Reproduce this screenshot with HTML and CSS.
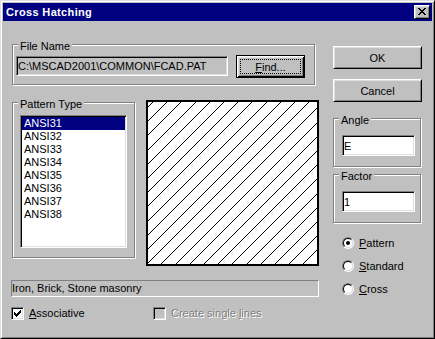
FILE: index.html
```html
<!DOCTYPE html>
<html>
<head>
<meta charset="utf-8">
<title>Cross Hatching</title>
<link rel="stylesheet" href="styles.css">
</head>
<body>
<div class="window">
  <div class="titlebar">
    <span class="title">Cross Hatching</span>
    <span class="close"><svg width="8" height="7" viewBox="0 0 8 7" shape-rendering="crispEdges"><path fill="#000" d="M0 0h2v1h-2zM6 0h2v1h-2zM1 1h2v1h-2zM5 1h2v1h-2zM2 2h4v1h-4zM3 3h2v1h-2zM2 4h4v1h-4zM1 5h2v1h-2zM5 5h2v1h-2zM0 6h2v1h-2zM6 6h2v1h-2z"/></svg></span>
  </div>
  <div class="content">
    <div class="left">
      <div class="group file-group">
        <div class="legend">File Name</div>
        <div class="file-row">
          <div class="edit readonly file-edit">C:\MSCAD2001\COMMON\FCAD.PAT</div>
          <div class="button default find"><span class="focus"><u>F</u>ind...</span></div>
        </div>
      </div>
      <div class="pattern-row">
        <div class="group pattern-group">
          <div class="legend">Pattern Type</div>
          <div class="listbox">
            <div class="item selected">ANSI31</div>
            <div class="item">ANSI32</div>
            <div class="item">ANSI33</div>
            <div class="item">ANSI34</div>
            <div class="item">ANSI35</div>
            <div class="item">ANSI36</div>
            <div class="item">ANSI37</div>
            <div class="item">ANSI38</div>
          </div>
        </div>
        <div class="preview">
          <svg width="169" height="162" viewBox="0 0 169 162" shape-rendering="crispEdges"><path stroke="#000" stroke-width="1" fill="none" d="M5 0L-195 200M19 0L-181 200M33 0L-167 200M48 0L-152 200M62 0L-138 200M76 0L-124 200M90 0L-110 200M104 0L-96 200M119 0L-81 200M133 0L-67 200M147 0L-53 200M161 0L-39 200M175 0L-25 200M190 0L-10 200M204 0L4 200M218 0L18 200M232 0L32 200M246 0L46 200M261 0L61 200M275 0L75 200M289 0L89 200M303 0L103 200M317 0L117 200M332 0L132 200"/></svg>
        </div>
      </div>
      <div class="status">Iron, Brick, Stone masonry</div>
      <div class="checks">
        <div class="check">
          <span class="box"><svg width="7" height="7" viewBox="0 0 7 7" shape-rendering="crispEdges"><path fill="#000" d="M6 0h1v1h-1zM5 1h2v1h-2zM0 2h1v1h-1zM4 2h3v1h-3zM0 3h2v1h-2zM3 3h3v1h-3zM0 4h5v1h-5zM1 5h3v1h-3zM2 6h1v1h-1z"/></svg></span>
          <span class="check-label"><u>A</u>ssociative</span>
        </div>
        <div class="check disabled">
          <span class="box"></span>
          <span class="check-label">Create single <u>l</u>ines</span>
        </div>
      </div>
    </div>
    <div class="right">
      <div class="button ok">OK</div>
      <div class="button cancel">Cancel</div>
      <div class="group small-group angle-group">
        <div class="legend">Angle</div>
        <div class="edit small-edit">E</div>
      </div>
      <div class="group small-group factor-group">
        <div class="legend">Factor</div>
        <div class="edit small-edit">1</div>
      </div>
      <div class="radios">
        <div class="radio checked"><span class="circle"><span class="circle-inner"><span class="dot"></span></span></span><span class="radio-label"><u>P</u>attern</span></div>
        <div class="radio"><span class="circle"><span class="circle-inner"></span></span><span class="radio-label"><u>S</u>tandard</span></div>
        <div class="radio"><span class="circle"><span class="circle-inner"></span></span><span class="radio-label"><u>C</u>ross</span></div>
      </div>
    </div>
  </div>
</div>
</body>
</html>
```
FILE: styles.css
```css
* { box-sizing: border-box; }
html, body { margin: 0; padding: 0; }
body {
  width: 435px;
  height: 339px;
  background: #c0c0c0;
  font-family: "Liberation Sans", Arial, sans-serif;
  font-size: 11px;
  color: #000;
}
u { text-decoration: underline; text-underline-offset: 1px; }

.window {
  width: 435px;
  height: 339px;
  background: #c0c0c0;
  border: 1px solid;
  border-color: #dfdfdf #000 #000 #dfdfdf;
  box-shadow: inset 1px 1px #fff, inset -1px -1px #808080;
  padding: 2px;
  display: flex;
  flex-direction: column;
}

.titlebar {
  flex: none;
  height: 18px;
  background: #000080;
  color: #fff;
  display: flex;
  align-items: center;
  justify-content: space-between;
  padding: 0 2px 0 3px;
}
.title {
  font-weight: bold;
  letter-spacing: 0.35px;
  line-height: 18px;
}
.close {
  width: 16px;
  height: 14px;
  background: #c0c0c0;
  border: 1px solid;
  border-color: #fff #000 #000 #fff;
  box-shadow: inset 1px 1px #dfdfdf, inset -1px -1px #808080;
  padding: 2px 0 0 3px;
  display: block;
}
.close svg { display: block; }

.content {
  flex: 1;
  display: flex;
  padding-left: 8px;
  gap: 14px;
}
.left {
  width: 308px;
  display: flex;
  flex-direction: column;
}
.right {
  width: 89px;
  display: flex;
  flex-direction: column;
}

.group {
  border: 1px solid #808080;
  box-shadow: inset 1px 1px #fff, 1px 1px #fff;
  display: flex;
  flex-direction: column;
}
.legend {
  align-self: flex-start;
  margin: -5px 0 0 5px;
  padding: 0 2px;
  height: 13px;
  line-height: 13px;
  background: #c0c0c0;
  white-space: nowrap;
}

.file-group {
  margin: 23px 0 0 1px;
  width: 303px;
  padding-bottom: 6px;
}
.file-row {
  display: flex;
  align-items: flex-start;
  margin: 2px 0 0 3px;
}

.edit {
  border: 1px solid;
  border-color: #808080 #fff #fff #808080;
  box-shadow: inset 1px 1px #000, inset -1px -1px #dfdfdf;
  background: #fff;
  padding-left: 1px;
  display: flex;
  align-items: center;
  white-space: nowrap;
  overflow: hidden;
}
.edit.readonly { background: #c0c0c0; }
.file-edit {
  margin-top: 1px;
  width: 212px;
  height: 20px;
}

.button {
  height: 23px;
  background: #c0c0c0;
  border: 1px solid;
  border-color: #fff #000 #000 #fff;
  box-shadow: inset 1px 1px #dfdfdf, inset -1px -1px #808080;
  display: flex;
  align-items: center;
  justify-content: center;
  white-space: nowrap;
}
.button.default {
  border-color: #000;
  box-shadow: inset 1px 1px #fff, inset -1px -1px #000, inset 2px 2px #dfdfdf, inset -2px -2px #808080;
  padding: 3px;
}
.find {
  margin-left: 8px;
  width: 69px;
}
.focus {
  flex: 1;
  align-self: stretch;
  border: 1px dotted #000;
  display: flex;
  align-items: center;
  justify-content: center;
}

.pattern-row {
  margin-top: 15px;
  display: flex;
  align-items: flex-start;
}
.pattern-group {
  margin: 2px 0 0 1px;
  width: 123px;
}
.listbox {
  margin: 4px 7px 9px 7px;
  height: 133px;
  background: #fff;
  border: 1px solid;
  border-color: #808080 #fff #fff #808080;
  box-shadow: inset 1px 1px #000, inset -1px -1px #dfdfdf;
  padding: 1px;
}
.item {
  height: 13px;
  line-height: 13px;
  padding-left: 2px;
  white-space: nowrap;
}
.item.selected {
  background: #000080;
  color: #fff;
}
.preview {
  margin-left: 11px;
  width: 173px;
  height: 166px;
  border: 2px solid #000;
  background: #fff;
}
.preview svg { display: block; }

.status {
  margin-top: 14px;
  height: 17px;
  line-height: 15px;
  border: 1px solid;
  border-color: #808080 #fff #fff #808080;
  padding-left: 0;
  white-space: nowrap;
}

.checks {
  margin-top: 10px;
  display: grid;
  grid-template-columns: 142px auto;
}
.check {
  display: flex;
  align-items: center;
  height: 13px;
  white-space: nowrap;
}
.box {
  width: 13px;
  height: 13px;
  flex: none;
  border: 1px solid;
  border-color: #808080 #fff #fff #808080;
  box-shadow: inset 1px 1px #000, inset -1px -1px #dfdfdf;
  background: #fff;
  padding: 2px 0 0 2px;
  display: block;
}
.box svg { display: block; }
.check-label { margin-left: 5px; line-height: 13px; }
.check.disabled .box { background: #c0c0c0; }
.check.disabled .check-label {
  color: #808080;
  text-shadow: 1px 1px 0 #fff;
}

.ok { margin-top: 25px; }
.cancel { margin-top: 10px; }
.small-group { width: 88px; }
.angle-group { margin-top: 16px; }
.factor-group { margin-top: 7px; }
.small-edit {
  margin: 8px 0 10px 8px;
  width: 73px;
  height: 21px;
}

.radios {
  margin-top: 8px;
  display: flex;
  flex-direction: column;
}
.radio {
  height: 23px;
  display: flex;
  align-items: center;
  padding-left: 9px;
  white-space: nowrap;
}
.circle {
  width: 12px;
  height: 12px;
  flex: none;
  border-radius: 50%;
  border: 1px solid;
  border-color: #808080 #fff #fff #808080;
  display: flex;
}
.circle-inner {
  flex: 1;
  border-radius: 50%;
  border: 1px solid;
  border-color: #000 #dfdfdf #dfdfdf #000;
  background: #fff;
  display: flex;
  align-items: center;
  justify-content: center;
}
.dot {
  width: 4px;
  height: 4px;
  border-radius: 50%;
  background: #000;
}
.radio-label { margin-left: 5px; }
```
